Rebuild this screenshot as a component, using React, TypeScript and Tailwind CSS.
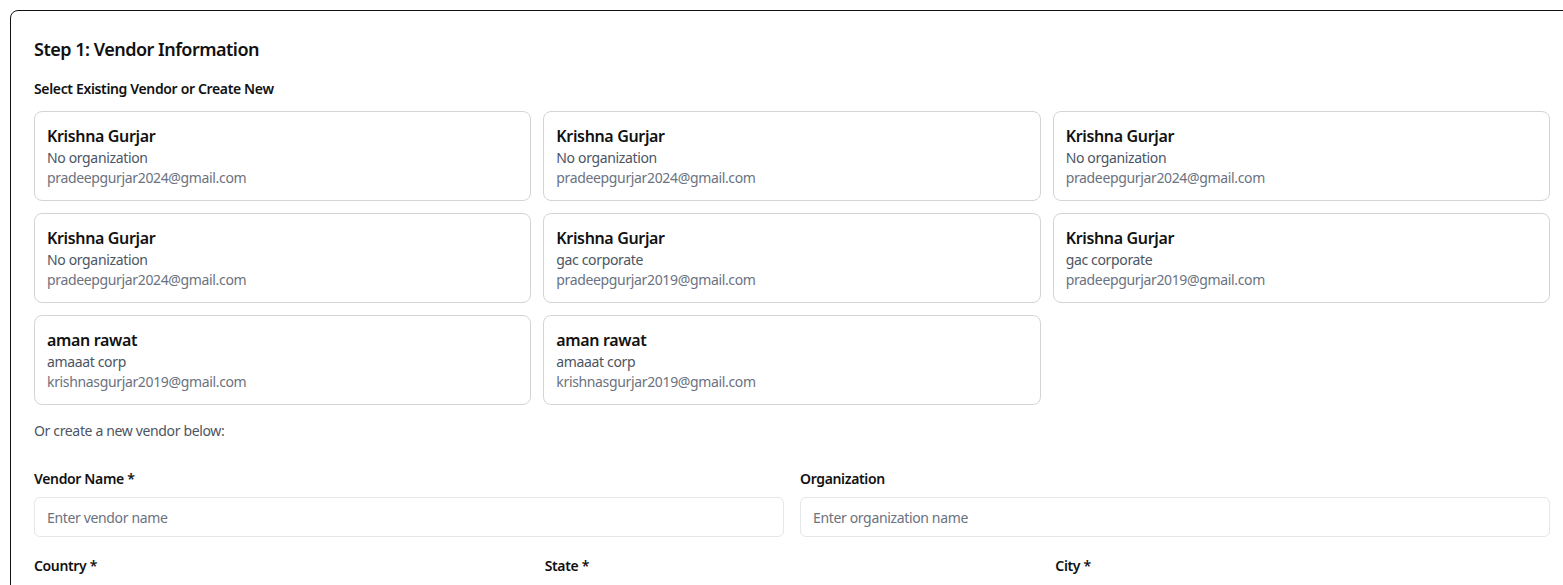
import React from "react";

const vendors = [
  { name: "Krishna Gurjar", org: "No organization", email: "pradeepgurjar2024@gmail.com" },
  { name: "Krishna Gurjar", org: "No organization", email: "pradeepgurjar2024@gmail.com" },
  { name: "Krishna Gurjar", org: "No organization", email: "pradeepgurjar2024@gmail.com" },
  { name: "Krishna Gurjar", org: "No organization", email: "pradeepgurjar2024@gmail.com" },
  { name: "Krishna Gurjar", org: "gac corporate", email: "pradeepgurjar2019@gmail.com" },
  { name: "Krishna Gurjar", org: "gac corporate", email: "pradeepgurjar2019@gmail.com" },
  { name: "aman rawat", org: "amaaat corp", email: "krishnasgurjar2019@gmail.com" },
  { name: "aman rawat", org: "amaaat corp", email: "krishnasgurjar2019@gmail.com" },
];

export default function App() {
  return (
    <div
      className="w-[1563px] h-[585px] overflow-hidden bg-white"
      style={{ fontFamily: '"Segoe UI", "Noto Sans", "Open Sans", sans-serif' }}
    >
      <div className="ml-[10px] mt-[10px] w-[1565px] rounded-lg border border-[#111] bg-white px-[23px] pt-[24px] text-[#111] tracking-[-0.35px]">
        <h2 className="text-lg font-semibold leading-7 tracking-[-0.5px]">Step 1: Vendor Information</h2>
        <p className="mt-4 text-sm font-semibold leading-5">Select Existing Vendor or Create New</p>
        <div className="mt-3 grid w-[1516px] grid-cols-3 gap-3">
          {vendors.map((v, i) => (
            <div key={i} className="rounded-lg border border-[#d4d4d8] bg-white p-3">
              <div className="text-base font-semibold leading-6 text-[#111]">{v.name}</div>
              <div className="text-sm leading-5 text-[#4b5563]">{v.org}</div>
              <div className="text-sm leading-5 text-[#6b7280]">{v.email}</div>
            </div>
          ))}
        </div>
        <p className="mt-4 text-sm leading-5 text-[#4b5563]">Or create a new vendor below:</p>
        <div className="mt-[28px] grid w-[1516px] grid-cols-2 gap-4">
          <div>
            <label className="block text-sm font-semibold leading-5">Vendor Name *</label>
            <input
              className="mt-2 h-10 w-full rounded-md border border-[#e5e7eb] px-3 text-sm tracking-[-0.35px] placeholder:text-[#6b7280] outline-none"
              placeholder="Enter vendor name"
            />
          </div>
          <div>
            <label className="block text-sm font-semibold leading-5">Organization</label>
            <input
              className="mt-2 h-10 w-full rounded-md border border-[#e5e7eb] px-3 text-sm tracking-[-0.35px] placeholder:text-[#6b7280] outline-none"
              placeholder="Enter organization name"
            />
          </div>
        </div>
        <div className="mt-[19px] grid w-[1516px] grid-cols-3 gap-4">
          <label className="block text-sm font-semibold leading-5">Country *</label>
          <label className="block text-sm font-semibold leading-5">State *</label>
          <label className="block text-sm font-semibold leading-5">City *</label>
        </div>
        <div className="h-40" />
      </div>
    </div>
  );
}
